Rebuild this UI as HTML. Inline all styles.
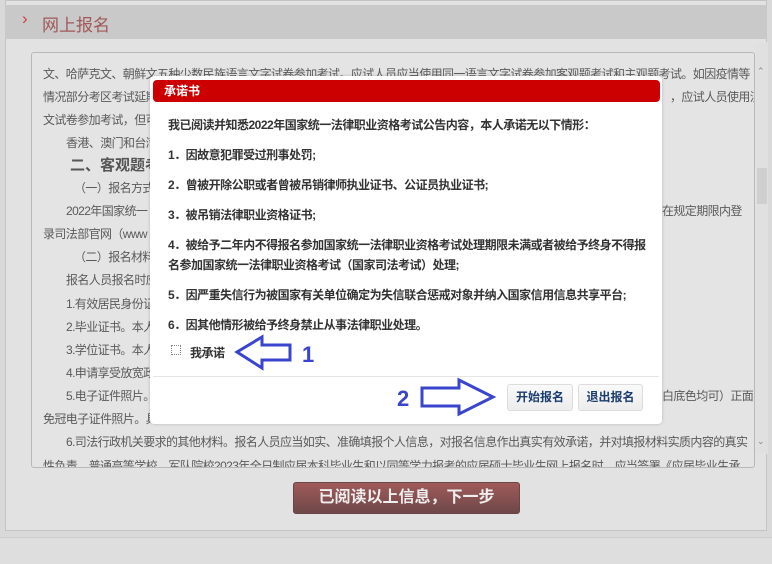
<!DOCTYPE html>
<html><head><meta charset="utf-8"><style>
*{margin:0;padding:0;box-sizing:border-box}
body{width:772px;height:564px;overflow:hidden;background:#d9d9d9;font-family:"Liberation Sans","Noto Sans CJK SC",sans-serif;position:relative}
.a{position:absolute;white-space:nowrap}
.bg{font-size:12px;color:#5a5a5a;letter-spacing:-0.6px}
.d{font-size:12px;font-weight:bold;color:#333;letter-spacing:-0.5px}
</style></head><body>
<div class="a" style="left:5px;top:0;width:762px;height:531px;background:#e2e2e2;border:1px solid #c4c4c4"></div>
<div class="a" style="left:5px;top:5px;width:762px;height:34px;background:#c9c9c9"></div>
<div class="a" style="left:22px;top:9px;font-size:17px;color:#d04040">&#8250;</div>
<div class="a" style="left:42px;top:11px;font-size:17px;color:#a05858">网上报名</div>
<div class="a" style="left:31px;top:52px;width:724px;height:416px;border:1px solid #b8b8b8;border-radius:3px;background:#e4e4e4;overflow:hidden">
<div class="a bg" style="left:11px;top:12px">文、哈萨克文、朝鲜文五种少数民族语言文字试卷参加考试。应试人员应当使用同一语言文字试卷参加客观题考试和主观题考试。如因疫情等</div>
<div class="a bg" style="left:11px;top:35px">情况部分考区考试延期</div>
<div class="a bg" style="left:638px;top:35px">，应试人员使用汉</div>
<div class="a bg" style="left:11px;top:58px">文试卷参加考试，但可</div>
<div class="a bg" style="left:34px;top:81px">香港、澳门和台湾</div>
<div class="a" style="left:38px;top:101px;font-size:15px;font-weight:bold;color:#555">二、客观题考试</div>
<div class="a bg" style="left:42px;top:126px">（一）报名方式与</div>
<div class="a bg" style="left:34px;top:149px">2022年国家统一</div>
<div class="a bg" style="left:630px;top:149px">在规定期限内登</div>
<div class="a bg" style="left:11px;top:172px">录司法部官网（www</div>
<div class="a bg" style="left:42px;top:195px">（二）报名材料</div>
<div class="a bg" style="left:34px;top:218px">报名人员报名时应</div>
<div class="a bg" style="left:34px;top:242px">1.有效居民身份证</div>
<div class="a bg" style="left:34px;top:265px">2.毕业证书。本人</div>
<div class="a bg" style="left:34px;top:288px">3.学位证书。本人</div>
<div class="a bg" style="left:34px;top:311px">4.申请享受放宽政</div>
<div class="a bg" style="left:34px;top:334px">5.电子证件照片。</div>
<div class="a bg" style="left:630px;top:334px">白底色均可）正面</div>
<div class="a bg" style="left:11px;top:357px">免冠电子证件照片。具</div>
<div class="a bg" style="left:34px;top:380px">6.司法行政机关要求的其他材料。报名人员应当如实、准确填报个人信息，对报名信息作出真实有效承诺，并对填报材料实质内容的真实</div>
<div class="a bg" style="left:11px;top:404px">性负责。普通高等学校、军队院校2023年全日制应届本科毕业生和以同等学力报考的应届硕士毕业生网上报名时，应当签署《应届毕业生承</div>
</div>
<div class="a" style="left:756px;top:42px;width:12px;height:412px;background:#e0e0e0"></div>
<div class="a" style="left:757px;top:168px;width:10px;height:36px;background:#cfcfcf"></div>
<div class="a" style="left:757px;top:66px;font-size:9px;color:#888">&#8963;</div>
<div class="a" style="left:757px;top:436px;font-size:9px;color:#888">&#8964;</div>
<div class="a" style="left:293px;top:482px;width:227px;height:32px;background:linear-gradient(#a05a5a,#6e4848);border:1px solid #6a4545;border-radius:3px;color:#eee;font-size:16px;font-weight:bold;text-align:center;line-height:30px">已阅读以上信息，下一步</div>
<div class="a" style="left:0;top:537px;width:772px;height:27px;background:#dedede;border-top:1px solid #ccc"></div>

<div class="a" style="left:150px;top:76px;width:512px;height:348px;background:#fff;border-radius:4px;box-shadow:0 0 3px rgba(0,0,0,.2)"></div>
<div class="a" style="left:153px;top:80px;width:507px;height:22px;background:#cc0000;border-radius:4px;color:#fff;font-size:12px;font-weight:bold;line-height:22px;padding-left:11px">承诺书</div>
<div class="a d" style="left:168px;top:116px">我已阅读并知悉2022年国家统一法律职业资格考试公告内容，本人承诺无以下情形：</div>
<div class="a d" style="left:168px;top:146px">1．因故意犯罪受过刑事处罚;</div>
<div class="a d" style="left:168px;top:176px">2．曾被开除公职或者曾被吊销律师执业证书、公证员执业证书;</div>
<div class="a d" style="left:168px;top:206px">3．被吊销法律职业资格证书;</div>
<div class="a d" style="left:168px;top:236px">4．被给予二年内不得报名参加国家统一法律职业资格考试处理期限未满或者被给予终身不得报</div>
<div class="a d" style="left:168px;top:256px">名参加国家统一法律职业资格考试（国家司法考试）处理;</div>
<div class="a d" style="left:168px;top:286px">5．因严重失信行为被国家有关单位确定为失信联合惩戒对象并纳入国家信用信息共享平台;</div>
<div class="a d" style="left:168px;top:316px">6．因其他情形被给予终身禁止从事法律职业处理。</div>
<div class="a" style="left:171px;top:345px;width:10px;height:10px;border:1px dotted #888"></div>
<div class="a d" style="left:190px;top:344px">我承诺</div>
<div class="a" style="left:153px;top:376px;width:506px;height:1px;background:#e5e5e5"></div>
<div class="a" style="left:507px;top:384px;width:66px;height:27px;border:1px solid #ddd;border-radius:3px;background:linear-gradient(#fafafa,#ececec);font-size:12px;font-weight:bold;color:#1a3c6e;text-align:center;line-height:25px">开始报名</div>
<div class="a" style="left:578px;top:384px;width:65px;height:27px;border:1px solid #ddd;border-radius:3px;background:linear-gradient(#fafafa,#ececec);font-size:12px;font-weight:bold;color:#1a3c6e;text-align:center;line-height:25px">退出报名</div>
<svg class="a" style="left:0;top:0" width="772" height="564">
<path d="M237 352 L262 337 L262 345 L290 345 L290 360 L262 360 L262 368 Z" fill="none" stroke="#3a44cc" stroke-width="3" stroke-linejoin="miter"/>
<path d="M422 388 L459 388 L459 380 L493 397 L459 414 L459 406 L422 406 Z" fill="none" stroke="#3a44cc" stroke-width="3"/>
<text x="302" y="362" font-family="Liberation Sans" font-size="22" font-weight="bold" fill="#3a44cc">1</text>
<text x="397" y="406" font-family="Liberation Sans" font-size="22" font-weight="bold" fill="#3a44cc">2</text>
</svg>
</body></html>
